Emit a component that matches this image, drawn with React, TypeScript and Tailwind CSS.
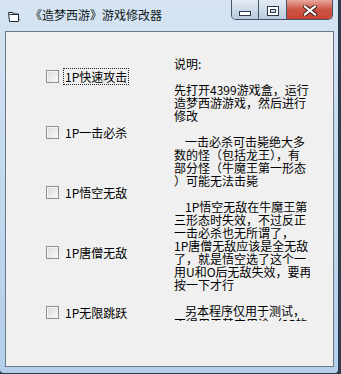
import React from 'react';

const options = ['1P快速攻击', '1P一击必杀', '1P悟空无敌', '1P唐僧无敌', '1P无限跳跃'];

// each line of the note label, as it wraps in the original window
const notes: { text: string; indent?: boolean }[] = [
  { text: '说明:' },
  { text: '' },
  { text: '先打开4399游戏盒，运行' },
  { text: '造梦西游游戏，然后进行' },
  { text: '修改' },
  { text: '' },
  { text: '一击必杀可击毙绝大多', indent: true },
  { text: '数的怪（包括龙王），有' },
  { text: '部分怪（牛魔王第一形态' },
  { text: '）可能无法击毙' },
  { text: '' },
  { text: '1P悟空无敌在牛魔王第', indent: true },
  { text: '三形态时失效，不过反正' },
  { text: '一击必杀也无所谓了，' },
  { text: '1P唐僧无敌应该是全无敌' },
  { text: '了，就是悟空选了这个一' },
  { text: '用U和O后无敌失效，要再' },
  { text: '按一下才行' },
  { text: '' },
  { text: '另本程序仅用于测试，', indent: true },
  { text: '不得用于其它用途（25的' },
];

function CheckBox() {
  return (
    <span className="block h-[13px] w-[13px] shrink-0 border border-[#8e8f8f] bg-gradient-to-br from-[#d9d9d9] to-[#fbfbfb] shadow-[inset_1px_1px_0_#f6f6f6]" />
  );
}

function FormIcon() {
  return (
    <svg width="14" height="12" viewBox="0 0 14 12">
      <path d="M1.5 1.5 H6 L7 3 H11.5 V10.5 H2.5 Z" fill="#ffffff" stroke="#1d2a36" strokeWidth="1" />
      <path d="M2.5 3.5 H11" stroke="#1d2a36" strokeWidth="1" />
      <path d="M12 8 L13.5 9" stroke="#7a8796" strokeWidth="1" />
    </svg>
  );
}

function CaptionButtons() {
  return (
    <div className="ml-auto mr-[5px] flex h-[20px] overflow-hidden rounded-b-[5px] border border-t-0 border-[#45546a]">
      <div className="flex w-[26px] items-end justify-center bg-gradient-to-b from-[#e4ecf5] via-[#cfdcea] to-[#b8cadd] pb-[3px]">
        <svg width="12" height="5" viewBox="0 0 12 5">
          <rect x="0.5" y="0.5" width="11" height="4" fill="#ffffff" stroke="#2c3a4b" />
        </svg>
      </div>
      <div className="w-px bg-[#45546a]" />
      <div className="flex w-[27px] items-end justify-center bg-gradient-to-b from-[#e4ecf5] via-[#cfdcea] to-[#b8cadd] pb-[3px]">
        <svg width="12" height="10" viewBox="0 0 12 10">
          <rect x="0.5" y="0.5" width="11" height="9" fill="#ffffff" stroke="#2c3a4b" />
          <rect x="3.5" y="3.5" width="5" height="3" fill="#c9d6e4" stroke="#2c3a4b" />
        </svg>
      </div>
      <div className="w-px bg-[#45546a]" />
      <div className="flex w-[45px] items-end justify-center bg-gradient-to-b from-[#e8a79b] via-[#cd5445] to-[#c84534] pb-[3px]">
        <svg width="14" height="11" viewBox="0 0 14 11">
          <path d="M2 1.5 L12 9.5 M12 1.5 L2 9.5" stroke="#3d1f1a" strokeWidth="4.2" strokeLinecap="square" />
          <path d="M2 1.5 L12 9.5 M12 1.5 L2 9.5" stroke="#ffffff" strokeWidth="2.2" strokeLinecap="square" />
        </svg>
      </div>
    </div>
  );
}

export default function App() {
  return (
    <div className="flex h-[374px] w-[341px] items-start overflow-hidden bg-[#2f3e4d] font-['Noto_Sans_CJK_SC',sans-serif] text-black">
      <div className="flex h-[374px] w-[339px] flex-col rounded-bl-[4px] rounded-br-[4px] border-b border-r border-[#2d3846] bg-gradient-to-b from-[#d6e4f2] via-[#c2d8ee] to-[#b3cfeb]">
        {/* title bar */}
        <div className="flex h-[31px] shrink-0 items-start">
          <div className="ml-[7px] mt-[11px]">
            <FormIcon />
          </div>
          <div className="ml-[9px] mt-[7px] whitespace-nowrap text-[12px] leading-[16px] text-[#101820]">
            《造梦西游》游戏修改器
          </div>
          <CaptionButtons />
        </div>

        {/* client area */}
        <div className="ml-[5px] mr-[4px] flex h-[336px] border border-[#6d7886] bg-[#f0f0f0]">
          <div className="flex w-[168px] flex-col pl-[40px] pt-[36px]">
            {options.map((label, i) => (
              <div
                key={label}
                className={
                  'flex h-[17px] items-center ' + (i === 0 ? '' : i === 1 ? 'mt-[39px]' : 'mt-[43px]')
                }
              >
                <CheckBox />
                <span
                  className={
                    'ml-[5px] whitespace-nowrap px-px text-[12px] leading-[15px] ' +
                    (i === 0 ? 'outline-1 outline-dotted outline-[#222]' : '')
                  }
                >
                  {label}
                </span>
              </div>
            ))}
          </div>

          <div className="mt-[25px] h-[264px] w-[136px] overflow-hidden text-[12px] leading-[13px]">
            {notes.map((n, i) => (
              <div key={i} className={'h-[13px] whitespace-nowrap ' + (n.indent ? 'pl-[11px]' : '')}>
                {n.text}
              </div>
            ))}
          </div>
        </div>
      </div>
    </div>
  );
}
